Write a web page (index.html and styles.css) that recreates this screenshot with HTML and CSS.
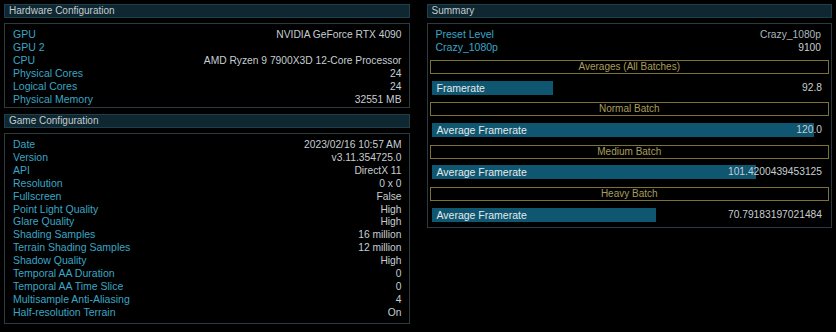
FILE: index.html
```html
<!DOCTYPE html>
<html>
<head>
<link rel="stylesheet" href="styles.css">
</head>
<body>
<div class="page">
    <div class="column">
        <div class="panel-title">Hardware Configuration</div>
        <div class="panel hardware">
            <div class="row"><span class="label">GPU</span><span class="value">NVIDIA GeForce RTX 4090</span></div>
            <div class="row"><span class="label">GPU 2</span><span class="value"></span></div>
            <div class="row"><span class="label">CPU</span><span class="value">AMD Ryzen 9 7900X3D 12-Core Processor</span></div>
            <div class="row"><span class="label">Physical Cores</span><span class="value">24</span></div>
            <div class="row"><span class="label">Logical Cores</span><span class="value">24</span></div>
            <div class="row"><span class="label">Physical Memory</span><span class="value">32551 MB</span></div>
        </div>

        <div class="panel-title">Game Configuration</div>
        <div class="panel game">
            <div class="row"><span class="label">Date</span><span class="value">2023/02/16 10:57 AM</span></div>
            <div class="row"><span class="label">Version</span><span class="value">v3.11.354725.0</span></div>
            <div class="row"><span class="label">API</span><span class="value">DirectX 11</span></div>
            <div class="row"><span class="label">Resolution</span><span class="value">0 x 0</span></div>
            <div class="row"><span class="label">Fullscreen</span><span class="value">False</span></div>
            <div class="row"><span class="label">Point Light Quality</span><span class="value">High</span></div>
            <div class="row"><span class="label">Glare Quality</span><span class="value">High</span></div>
            <div class="row"><span class="label">Shading Samples</span><span class="value">16 million</span></div>
            <div class="row"><span class="label">Terrain Shading Samples</span><span class="value">12 million</span></div>
            <div class="row"><span class="label">Shadow Quality</span><span class="value">High</span></div>
            <div class="row"><span class="label">Temporal AA Duration</span><span class="value">0</span></div>
            <div class="row"><span class="label">Temporal AA Time Slice</span><span class="value">0</span></div>
            <div class="row"><span class="label">Multisample Anti-Aliasing</span><span class="value">4</span></div>
            <div class="row"><span class="label">Half-resolution Terrain</span><span class="value">On</span></div>
        </div>
    </div>

    <div class="column">
        <div class="panel-title">Summary</div>
        <div class="panel summary">
            <div class="row"><span class="label">Preset Level</span><span class="value dim">Crazy_1080p</span></div>
            <div class="row"><span class="label">Crazy_1080p</span><span class="value">9100</span></div>

            <div class="batch first">Averages (All Batches)</div>
            <div class="bar-row">
                <div class="bar" style="width: 31%"></div>
                <span class="bar-label">Framerate</span><span class="bar-value">92.8</span>
            </div>

            <div class="batch">Normal Batch</div>
            <div class="bar-row">
                <div class="bar" style="width: 98%"></div>
                <span class="bar-label">Average Framerate</span><span class="bar-value">120.0</span>
            </div>

            <div class="batch">Medium Batch</div>
            <div class="bar-row">
                <div class="bar" style="width: 83%"></div>
                <span class="bar-label">Average Framerate</span><span class="bar-value">101.4200439453125</span>
            </div>

            <div class="batch">Heavy Batch</div>
            <div class="bar-row">
                <div class="bar" style="width: 57.5%"></div>
                <span class="bar-label">Average Framerate</span><span class="bar-value">70.79183197021484</span>
            </div>
        </div>
    </div>
</div>
</body>
</html>
```

FILE: styles.css
```css
body {
    margin: 0;
    background: #000;
    font-family: "Liberation Sans", Arial, sans-serif;
}
.page {
    display: flex;
    gap: 17px;
    padding: 4px;
}
.column {
    width: 406px;
    display: flex;
    flex-direction: column;
}
.panel-title {
    height: 12px;
    line-height: 12px;
    padding: 0 4px;
    background: #0e2730;
    border: 1px solid #1f3f4a;
    color: #c2cbcf;
    font-size: 10px;
    margin-bottom: 5px;
}
.panel {
    border: 1px solid #2b3a40;
    padding: 4px 7px 1px 8px;
}
.panel.hardware {
    margin-bottom: 6px;
}
.panel.game {
    padding-bottom: 4px;
}
.panel.summary {
    padding: 4px 2px 5px 2px;
}
.row {
    display: flex;
    justify-content: space-between;
    height: 13px;
    line-height: 13px;
    font-size: 10.5px;
}
.game .row {
    height: 12.92px;
}
.summary .row {
    padding: 0 8px 0 6px;
}
.label {
    color: #3aa6c6;
}
.value {
    color: #c6ced2;
    font-size: 10.25px;
}
.value.dim {
    color: #a9b7bd;
}
.batch {
    height: 12px;
    line-height: 12px;
    border: 1px solid #7d7236;
    color: #a89c5c;
    font-size: 10px;
    text-align: center;
    margin: 7.67px 0 6.67px 0;
}
.batch.first {
    margin-top: 6px;
}
.bar-row {
    position: relative;
    display: flex;
    justify-content: space-between;
    height: 14px;
    line-height: 14px;
    margin: 0 7px 0 2px;
    font-size: 10.5px;
}
.bar {
    position: absolute;
    left: 0;
    top: 0;
    bottom: 0;
    background: #0f5670;
}
.bar-label {
    position: relative;
    padding-left: 5px;
    color: #e4eaec;
}
.bar-value {
    position: relative;
    color: #c6ced2;
    font-size: 10.25px;
}
```
